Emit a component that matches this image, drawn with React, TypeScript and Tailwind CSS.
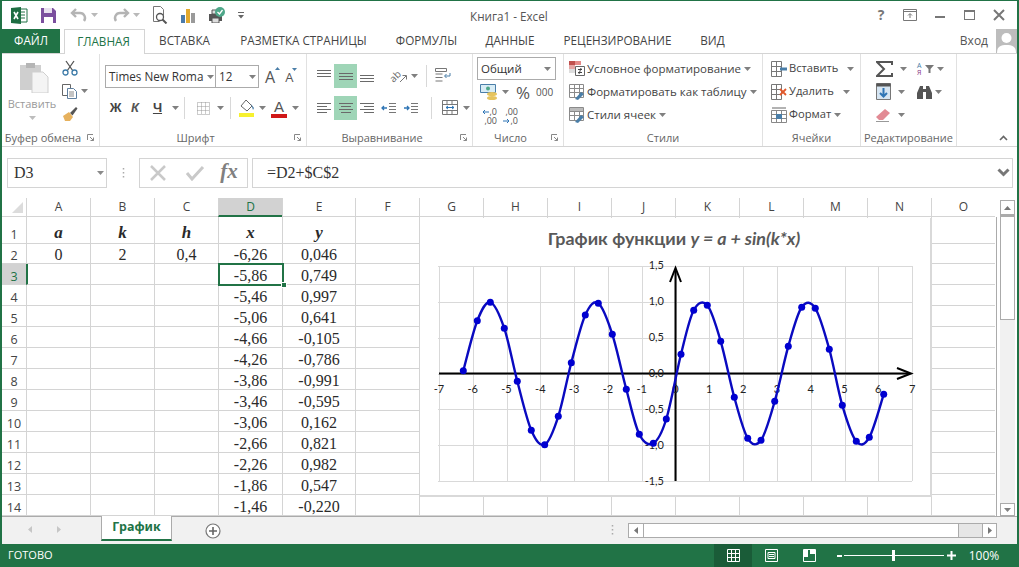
import React from "react";

const UI = "font-['Open_Sans',sans-serif]";
const Caret = ({ c = "#808080" }: { c?: string }) => (
  <svg width="7" height="4" viewBox="0 0 7 4" className="shrink-0"><path d="M0 0h7L3.500 4z" fill={c} /></svg>
);
const S = ({ w = 16, h = 16, children }: { w?: number; h?: number; children: React.ReactNode }) => (
  <svg width={w} height={h} viewBox={`0 0 ${w} ${h}`} className="shrink-0">{children}</svg>
);
const Cell = ({ w, children, className = "" }: { w: number; children?: React.ReactNode; className?: string }) => (
  <div className={`flex items-center justify-center shrink-0 ${className}`} style={{ width: w }}>{children}</div>
);
const VSep = () => <div className="w-px h-[22px] bg-[#d8d8d8] shrink-0" />;

const Lines = ({ ys, x1s, x2s }: { ys: number[]; x1s: number[]; x2s: number[] }) => (
  <S w={16} h={14}>
    {ys.map((y, i) => <path key={i} d={`M${x1s[i]} ${y + 0.5}H${x2s[i]}`} stroke="#6a6a6a" />)}
  </S>
);

const points: [number, number][] = [
  [463.3, 370.7], [477.3, 320.7], [490.3, 302.3], [504.3, 328.3], [517.3, 381.3], [531.3, 430.3], [544.7, 444.7], [558.3, 416.3],
  [571.3, 362.7], [585.3, 315], [598.3, 303.3], [612.3, 334.3], [626.3, 389.3], [639.3, 434.3], [653.3, 443.3], [666.3, 419],
  [681, 354.3], [693.7, 310.3], [707.3, 305.3], [720.7, 341.3], [734.3, 397.3], [747.7, 438.3], [761, 440.3], [774.7, 401.3],
  [788.3, 346.3], [801.7, 307.3], [815.3, 308.3], [829.3, 349.3], [842.3, 405.3], [856.3, 441.3], [869.3, 437.3], [883.7, 394.3],
];
function smooth(p: [number, number][]) {
  let d = `M${p[0][0]} ${p[0][1]}`;
  for (let i = 0; i < p.length - 1; i++) {
    const a = p[i - 1] || p[i], b = p[i], c = p[i + 1], e = p[i + 2] || c;
    d += `C${b[0] + (c[0] - a[0]) / 6} ${b[1] + (c[1] - a[1]) / 6} ${c[0] - (e[0] - b[0]) / 6} ${c[1] - (e[1] - b[1]) / 6} ${c[0]} ${c[1]}`;
  }
  return d;
}

const rows: [number, string[]][] = [
  [1, ["a", "k", "h", "x", "y"]],
  [2, ["0", "2", "0,4", "-6,26", "0,046"]],
  [3, ["", "", "", "-5,86", "0,749"]],
  [4, ["", "", "", "-5,46", "0,997"]],
  [5, ["", "", "", "-5,06", "0,641"]],
  [6, ["", "", "", "-4,66", "-0,105"]],
  [7, ["", "", "", "-4,26", "-0,786"]],
  [8, ["", "", "", "-3,86", "-0,991"]],
  [9, ["", "", "", "-3,46", "-0,595"]],
  [10, ["", "", "", "-3,06", "0,162"]],
  [11, ["", "", "", "-2,66", "0,821"]],
  [12, ["", "", "", "-2,26", "0,982"]],
  [13, ["", "", "", "-1,86", "0,547"]],
  [14, ["", "", "", "-1,46", "-0,220"]],
];
const cols: [string, number][] = [["A", 64], ["B", 64], ["C", 64], ["D", 64], ["E", 73], ["F", 64], ["G", 64], ["H", 64], ["I", 64], ["J", 64], ["K", 64], ["L", 64], ["M", 64], ["N", 64], ["O", 64]];
const tabs: [string, number][] = [["ВСТАВКА", 81], ["РАЗМЕТКА СТРАНИЦЫ", 157], ["ФОРМУЛЫ", 89], ["ДАННЫЕ", 78], ["РЕЦЕНЗИРОВАНИЕ", 137], ["ВИД", 53]];

function Group({ w, label, launcher, children }: { w: number; label: string; launcher?: boolean; children: React.ReactNode }) {
  return (
    <div className="relative flex flex-col h-full shrink-0 border-r border-[#e1e1e1]" style={{ width: w }}>
      <div className="flex-1 min-h-0">{children}</div>
      <div className={`h-[17px] pt-[2px] flex items-center justify-center text-[11px] text-[#666] whitespace-nowrap ${launcher ? "pr-[15px]" : ""}`}>{label}</div>
      {launcher && (
        <svg width="7" height="7" viewBox="0 0 7 7" className="absolute right-[5px] bottom-[5px]"><path d="M.5 6V.5H6M3 3l3.500 3.500M6.500 3.500v3h-3" fill="none" stroke="#888" /></svg>
      )}
    </div>
  );
}

const StyleRow = ({ icon, text, carX = 3, small }: { icon: React.ReactNode; text: string; carX?: number; small?: boolean }) => (
  <div className="flex items-center h-[23px]">
    <div className="w-[20px] flex justify-center shrink-0">{icon}</div>
    <span className={`${small ? "text-[11.2px]" : "text-[11.5px]"} text-[#444] whitespace-nowrap`}>{text}</span>
    <span style={{ marginLeft: carX }}><Caret /></span>
  </div>
);

const TableIcon = ({ children }: { children?: React.ReactNode }) => (
  <S>
    <path d="M.5.5h14v13H.5zM.5 4.500h14M.5 8.500h14M5.500.5v13M10.500.5v13" fill="#fff" stroke="#8a8a8a" />
    {children}
  </S>
);

export default function App() {
  return (
    <div className={`relative flex flex-col w-[1019px] h-[567px] overflow-hidden bg-white border-x-2 border-t border-[#217346] ${UI}`}>
      {/* title bar */}
      <div className="flex items-center h-[28px] shrink-0 relative">
        <div className="flex items-center pl-[9px]">
          <S w={17} h={17}>
            <path d="M6 2h10v13H6z" fill="#fff" stroke="#217346" />
            <path d="M9 5h5M9 8h5M9 11h5" stroke="#217346" />
            <path d="M0 1l10-1v17L0 16z" fill="#1e6e42" />
            <path d="M3 5l4 7M7 5l-4 7" stroke="#fff" strokeWidth="1.600" />
          </S>
          <div className="w-[13px]" />
          <S w={15} h={15}>
            <path d="M0 0h12l3 3v12H0z" fill="#7b4f9e" />
            <path d="M3 0h8v5H3z" fill="#e8e0ef" /><path d="M3 9h9v6H3z" fill="#fff" />
          </S>
          <div className="w-[14px]" />
          <S w={18} h={14}>
            <path d="M6 1L2 5l4 4" fill="none" stroke="#b4b4b4" strokeWidth="2.400" />
            <path d="M3 5h7a5 5 0 0 1 4 8" fill="none" stroke="#b4b4b4" strokeWidth="2.400" />
          </S>
          <div className="w-[3px]" /><Caret c="#b9b9b9" />
          <div className="w-[14px]" />
          <S w={18} h={14}>
            <path d="M12 1l4 4-4 4" fill="none" stroke="#b4b4b4" strokeWidth="2.400" />
            <path d="M15 5H8a5 5 0 0 0-4 8" fill="none" stroke="#b4b4b4" strokeWidth="2.400" />
          </S>
          <div className="w-[3px]" /><Caret c="#b9b9b9" />
          <div className="w-[12px]" />
          <S w={16} h={18}>
            <path d="M1.500 .5h7l3 3v6M1.500 .5v15h6" fill="#fff" stroke="#777" />
            <circle cx="8" cy="11" r="3.500" fill="#fff" stroke="#555" strokeWidth="1.300" />
            <path d="M10.500 13.500l4 4" stroke="#555" strokeWidth="2" />
          </S>
          <div className="w-[12px]" />
          <S w={16} h={15}>
            <path d="M1 7h4v8H1z" fill="#4b7bab" /><path d="M6 1h4v14H6z" fill="#e2a92d" /><path d="M11 5h4v10h-4z" fill="#9a9a9a" />
          </S>
          <div className="w-[12px]" />
          <S w={18} h={16}>
            <path d="M1 7h13v7H1z" fill="#555" /><path d="M4 3h7v4H4zM4 11h7v5H4z" fill="#ddd" stroke="#555" />
            <circle cx="12" cy="5" r="5" fill="#4ea789" /><path d="M9.500 5l2 2 3-4" fill="none" stroke="#fff" strokeWidth="1.300" />
          </S>
          <div className="w-[11px]" />
          <svg width="8" height="8" viewBox="0 0 8 8"><path d="M1 1.500h6" stroke="#666" /><path d="M1 4h6L4 7.500z" fill="#666" /></svg>
        </div>
        <div className="absolute left-[468px] top-[6px] text-[11.7px] leading-[18px] text-[#555] whitespace-nowrap">Книга1 - Excel</div>
        <div className="ml-auto flex items-center mr-[4px] text-[#777]">
          <span className="w-[28px] text-center text-[14px] font-bold leading-none">?</span>
          <Cell w={30}><S w={14} h={12}><path d="M.5.5h13v11H.5zM.5 2.500h13" fill="none" stroke="#777" /><path d="M7 9V5M5 6.500l2-2 2 2" fill="none" stroke="#777" /></S></Cell>
          <Cell w={30}><div className="w-[10px] h-[2px] bg-[#777] mt-[4px]" /></Cell>
          <Cell w={29}><div className="w-[11px] h-[10px] border border-[#777] border-t-2" /></Cell>
          <Cell w={29}><S w={12} h={12}><path d="M1 1l10 10M11 1L1 11" stroke="#777" strokeWidth="2" /></S></Cell>
        </div>
      </div>

      {/* tabs */}
      <div className="flex h-[25px] shrink-0 border-b border-[#d4d4d4] text-[11.7px] text-[#444] relative">
        <div className="w-[58px] h-[24px] bg-[#217346] text-white flex items-center justify-center">ФАЙЛ</div>
        <div className="w-[4px]" />
        <div className="w-[81px] h-[25px] pr-[2px] bg-white border border-b-0 border-[#d4d4d4] text-[#217346] flex items-center justify-center">ГЛАВНАЯ</div>
        {tabs.map(([t, w]) => (
          <div key={t} className="flex items-center justify-center h-[24px] pr-[2px] whitespace-nowrap" style={{ width: w }}>{t}</div>
        ))}
        <div className="ml-auto flex items-center h-[24px]">
          <span className="text-[12px] text-[#555] mr-[8px]">Вход</span>
          <div className="w-[21px] h-[24px] bg-[#bdbdbd] overflow-hidden flex justify-center">
            <S w={21} h={24}><circle cx="10.500" cy="9" r="5" fill="#fff" /><path d="M1 24c0-7 4-8 9.500-8s9.500 1 9.500 8z" fill="#fff" /></S>
          </div>
        </div>
      </div>

      {/* ribbon */}
      <div className="relative flex h-[93px] shrink-0 border-b border-[#d4d4d4] text-[#444]">
        <Group w={98} label="Буфер обмена" launcher>
          <div className="flex h-full">
            <div className="w-[60px] flex flex-col items-center pt-[8px] pl-[3px]">
              <S w={30} h={31}>
                <path d="M1 3h21v25H1z" fill="#cfcfcf" /><path d="M7 1h9v5H7z" fill="#b5b5b5" />
                <path d="M13 10h11l5 5v16H13z" fill="#f4f4f4" stroke="#cfcfcf" />
              </S>
              <span className="text-[11px] text-[#9a9a9a] mt-[3px] leading-[16px] -ml-[3px]">Вставить</span>
              <div className="mt-[4px] -ml-[3px]"><Caret c="#bdbdbd" /></div>
            </div>
            <div className="flex flex-col pt-[2px]">
              <div className="flex h-[23px] items-center">
                <S w={16} h={16}><path d="M4 1l7 10M12 1L5 11" stroke="#555" strokeWidth="1.300" /><circle cx="3.500" cy="12.500" r="2.500" fill="none" stroke="#3d7ba8" strokeWidth="1.300" /><circle cx="12.500" cy="12.500" r="2.500" fill="none" stroke="#3d7ba8" strokeWidth="1.300" /></S>
              </div>
              <div className="flex h-[23px] items-center">
                <S w={16} h={16}><path d="M.5 1.500h8v11h-8z" fill="#fff" stroke="#666" /><path d="M5.500 5.500h6l3 3v7h-9z" fill="#fff" stroke="#5f7f9f" /><path d="M7 9h5M7 11h5M7 13h5" stroke="#888" /></S>
                <span className="ml-[3px]"><Caret /></span>
              </div>
              <div className="flex h-[23px] items-center">
                <S w={16} h={16}><path d="M8 7l6-6 1.500 1.500-5 7z" fill="#555" /><path d="M1 10l6-4 4 5-3 4H3z" fill="#e6b15d" /></S>
              </div>
            </div>
          </div>
        </Group>
        <Group w={207} label="Шрифт" launcher>
          <div className="pl-[5px] pt-[11px]">
            <div className="flex items-center h-[23px]">
              <div className="flex items-center w-[111px] h-[23px] border border-[#ababab] pl-[3px] text-[11.7px] text-[#333] whitespace-nowrap overflow-hidden">
                <span className="w-[98px]">Times New Roma</span><Caret />
              </div>
              <div className="flex items-center w-[43px] h-[23px] border border-l-0 border-[#ababab] pl-[3px] text-[11.7px] text-[#333]">
                <span className="w-[30px]">12</span><Caret />
              </div>
              <span className="ml-[6px] text-[16px] leading-none text-[#555] relative">A<span className="absolute -top-[2px] left-[10px]"><svg width="5" height="3" viewBox="0 0 5 3"><path d="M0 3h5L2.500 0z" fill="#4a7ea8" /></svg></span></span>
              <span className="ml-[10px] text-[13px] leading-none text-[#555] mt-[2px] relative">A<span className="absolute -top-[3px] left-[7px]"><svg width="5" height="3" viewBox="0 0 5 3"><path d="M0 0h5L2.500 3z" fill="#4a7ea8" /></svg></span></span>
            </div>
            <div className="flex items-center h-[24px] mt-[8px] ">
              <Cell w={21} className="text-[13px] font-bold font-['Liberation_Sans'] text-[#444]">Ж</Cell>
              <Cell w={18} className="text-[13px] font-bold italic font-['Liberation_Sans'] text-[#555]">К</Cell>
              <Cell w={27} className="text-[13px] font-bold font-['Liberation_Sans'] text-[#444] underline">Ч</Cell>
              <Cell w={8}><Caret /></Cell>
              <Cell w={11}><VSep /></Cell>
              <Cell w={26}><S w={13} h={13}><path d="M.5.5h12v12H.5zM4.500.5v12M8.500.5v12M.5 4.500h12M.5 8.500h12" fill="none" stroke="#999" strokeDasharray="1 1" /></S></Cell>
              <Cell w={9}><Caret /></Cell>
              <Cell w={11}><VSep /></Cell>
              <Cell w={22}>
                <S w={16} h={19}><path d="M7 1l6 6-5 5-6-5z" fill="#fff" stroke="#666" /><path d="M12 5l3 4-1 2z" fill="#4a7ea8" /><path d="M0 14h15v4H0z" fill="#f7f12f" /></S>
              </Cell>
              <Cell w={9}><Caret /></Cell>
              <Cell w={24} className="flex-col">
                <span className="text-[15px] leading-[15px] text-[#555] font-['Liberation_Sans']">A</span>
                <div className="w-[16px] h-[4px] bg-[#d01818]" />
              </Cell>
              <Cell w={8}><Caret /></Cell>
            </div>
          </div>
        </Group>
        <Group w={166} label="Выравнивание" launcher>
          <div className="pl-[7px] pt-[9px]">
            <div className="flex items-center h-[25px]">
              <Cell w={20}><Lines ys={[1, 4, 7]} x1s={[1, 1, 1]} x2s={[15, 15, 15]} /></Cell>
              <Cell w={23} className="h-[24px] bg-[#9fd5b7]"><Lines ys={[4, 7, 10]} x1s={[1, 1, 1]} x2s={[15, 15, 15]} /></Cell>
              <Cell w={20}><Lines ys={[6, 9, 12]} x1s={[1, 1, 1]} x2s={[15, 15, 15]} /></Cell>
              <Cell w={26} className="ml-[8px] relative">
                <span className="-rotate-45 text-[10px] leading-none text-[#666] -ml-[7px] mt-[1px]">ab</span>
                <svg width="9" height="9" viewBox="0 0 9 9" className="absolute right-[3px] top-[4px]"><path d="M1 8l6-6M3.500 1.500H7.500V5.500" fill="none" stroke="#777" /></svg>
              </Cell>
              <Caret />
              <Cell w={16}><VSep /></Cell>
              <Cell w={17}><S w={16} h={16}><path d="M.5.5h11v3H.5zM.5 6h7M.5 9.500h7M.5 13h7" fill="none" stroke="#777" /><path d="M15 5v3h-5M11.500 6L9.500 8l2 2" fill="none" stroke="#4a7ea8" /></S></Cell>
            </div>
            <div className="flex items-center h-[25px] mt-[7px]">
              <Cell w={20}><Lines ys={[2, 5, 8, 11]} x1s={[1, 1, 1, 1]} x2s={[15, 11, 15, 11]} /></Cell>
              <Cell w={23} className="h-[24px] bg-[#9fd5b7]"><Lines ys={[2, 5, 8, 11]} x1s={[1, 3, 1, 3]} x2s={[15, 13, 15, 13]} /></Cell>
              <Cell w={20}><Lines ys={[2, 5, 8, 11]} x1s={[1, 5, 1, 5]} x2s={[15, 15, 15, 15]} /></Cell>
              <Cell w={24}><S w={16} h={14}><path d="M8 2.500h7M8 5.500h7M8 8.500h7M8 11.500h7" stroke="#777" /><path d="M6 7H1M3 5L1 7l2 2" fill="none" stroke="#2f75b5" strokeWidth="1.300" /></S></Cell>
              <Cell w={20}><S w={16} h={14}><path d="M8 2.500h7M8 5.500h7M8 8.500h7M8 11.500h7" stroke="#777" /><path d="M1 7h5M4 5l2 2-2 2" fill="none" stroke="#2f75b5" strokeWidth="1.300" /></S></Cell>
              <Cell w={20}><VSep /></Cell>
              <Cell w={17}><S w={16} h={15}><path d="M.5.5h15v14H.5zM.5 4.500h15M.5 10.500h15M5 .5v4M10 .5v4M5 10.500v4M10 10.500v4" fill="none" stroke="#777" /><path d="M4 7.500h8M6 6L4 7.500 6 9M10 6l2 1.500L10 9" fill="none" stroke="#2f75b5" /></S></Cell>
              <span className="ml-[5px]"><Caret /></span>
            </div>
          </div>
        </Group>
        <Group w={91} label="Число" launcher>
          <div className="pl-[4px] pt-[3px]">
            <div className="flex items-center w-[79px] h-[23px] border border-[#ababab] pl-[3px] text-[11.5px] text-[#333]">
              <span className="w-[63px]">Общий</span><Caret />
            </div>
            <div className="flex items-center h-[24px] pl-[3px]">
              <S w={19} h={19}><path d="M.5 1.500h15v8H.5z" fill="#d8ecf5" stroke="#4a7ea8" /><circle cx="8" cy="5.500" r="2" fill="#4ea789" /><ellipse cx="12" cy="11" rx="5" ry="2" fill="#e6c45e" /><ellipse cx="12" cy="15" rx="5" ry="2" fill="#e6c45e" /></S>
              <span className="ml-[3px]"><Caret /></span>
              <span className="ml-[7px] text-[17px] text-[#555] leading-none">%</span>
              <span className="ml-[6px] text-[10px] text-[#555] leading-none">000</span>
            </div>
            <div className="flex items-center h-[24px] pl-[3px] gap-[4px] text-[#555] text-[9px] leading-[9px]">
              <div className="flex flex-col w-[17px]">
                <div className="flex items-center justify-end gap-[1px]"><svg width="7" height="6" viewBox="0 0 7 6"><path d="M7 3H1M3 1L1 3l2 2" fill="none" stroke="#2f75b5" /></svg><span>,0</span></div>
                <span className="text-right">,00</span>
              </div>
              <div className="flex flex-col w-[17px]">
                <span className="text-right">,00</span>
                <div className="flex items-center justify-end gap-[1px]"><svg width="7" height="6" viewBox="0 0 7 6"><path d="M0 3h6M4 1l2 2-2 2" fill="none" stroke="#2f75b5" /></svg><span>,0</span></div>
              </div>
            </div>
          </div>
        </Group>
        <Group w={199} label="Стили">
          <div className="pl-[3px] pt-[3px]">
            <StyleRow text="Условное форматирование" icon={
              <S w={17} h={17}>
                <path d="M0 1h6v4H0z" fill="#c0504d" /><path d="M6 1h6v4H6z" fill="#e58a88" /><path d="M0 5h6v4H0z" fill="#e5a5a3" /><path d="M0 9h6v4H0z" fill="#ddd" /><path d="M6.500 6.500h9v9h-9z" fill="#fff" stroke="#666" /><path d="M9 9.500h4M9 12.500h4M12 8l-2 6" stroke="#444" />
              </S>} />
            <StyleRow text="Форматировать как таблицу" icon={
              <TableIcon><path d="M6 15l6-7 3 2-6 6z" fill="#4a7ea8" /></TableIcon>} />
            <StyleRow text="Стили ячеек" icon={
              <TableIcon><path d="M1 1h13v3H1z" fill="#bbb" /><path d="M6 15l6-7 3 2-6 6z" fill="#4a7ea8" /></TableIcon>} />
          </div>
        </Group>
        <Group w={98} label="Ячейки">
          <div className="pl-[6px] pt-[3px]">
            <StyleRow small carX={9} text="Вставить" icon={<S w={17} h={16}><path d="M.5.5h10v15H.5zM.5 5.500h10M.5 10.500h10M5.500.5v15" fill="#fff" stroke="#777" /><path d="M9 8h7" stroke="#4a7ea8" strokeWidth="3" /></S>} />
            <StyleRow small carX={9} text="Удалить" icon={<S w={17} h={16}><path d="M.5.5h10v15H.5zM.5 5.500h10M.5 10.500h10M5.500.5v15" fill="#fff" stroke="#777" /><path d="M9 5l6 6M15 5l-6 6" stroke="#e2592c" strokeWidth="1.800" /></S>} />
            <StyleRow small text="Формат" icon={<S w={16} h={16}><path d="M.5 3.500h15v12H.5zM.5 7.500h15M.5 11.500h15M5.500 3.500v12M10.500 3.500v12" fill="#fff" stroke="#888" /><path d="M5 7h6v5H5z" fill="#4a7ea8" /><path d="M1 1h14" stroke="#666" /></S>} />
          </div>
        </Group>
        <Group w={96} label="Редактирование">
          <div className="pl-[15px] pt-[3px]">
            <div className="flex items-center h-[23px]">
              <S w={17} h={16}><path d="M16 4V1H1l7 7-7 7h15v-3" fill="none" stroke="#555" strokeWidth="2" /></S>
              <span className="ml-[7px]"><Caret /></span>
              <div className="w-[10px]" />
              <div className="flex flex-col text-[7px] leading-[7px] w-[8px]"><span className="text-[#4a7ea8]">А</span><span className="text-[#8a3f8a]">Я</span></div>
              <svg width="9" height="8" viewBox="0 0 9 8"><path d="M0 0h9L5.500 4v4h-2V4z" fill="#777" /></svg>
              <span className="ml-[3px]"><Caret /></span>
            </div>
            <div className="flex items-center h-[23px]">
              <S w={15} h={17}><path d="M.5 .5h14v16H.5z" fill="#d6e5f2" stroke="#777" /><path d="M.5 .5h14v3H.5z" fill="#555" /><path d="M7.500 5v8M4 10l3.500 3.500L11 10" fill="none" stroke="#2f75b5" strokeWidth="2" /></S>
              <span className="ml-[7px]"><Caret /></span>
              <div className="w-[12px]" />
              <S w={15} h={14}><path d="M3 1h3v3h3V1h3l3 7v6h-6V7H6v7H0V8z" fill="#555" /></S>
              <span className="ml-[3px]"><Caret /></span>
            </div>
            <div className="flex items-center h-[23px]">
              <S w={15} h={14}><path d="M0 9l9-8 5 4-7 7H3z" fill="#e28a94" /><path d="M0 13.500h13" stroke="#999" /></S>
              <span className="ml-[7px]"><Caret /></span>
            </div>
          </div>
        </Group>
        <svg width="9" height="6" viewBox="0 0 9 6" className="absolute left-[997px] bottom-[5px]"><path d="M1 5l3.500-3.500L8 5" fill="none" stroke="#666" strokeWidth="1.600" /></svg>
      </div>

      {/* formula bar */}
      <div className="flex items-center h-[51px] shrink-0 pl-[5px] pr-[4px]">
        <div className="flex items-center w-[100px] h-[30px] border border-[#d4d4d4] pl-[6px] font-['Liberation_Serif',serif] text-[16px] text-[#333]">
          <span className="w-[83px]">D3</span><Caret c="#8a8a8a" />
        </div>
        <div className="w-[32px] flex justify-center">
          <svg width="3" height="12" viewBox="0 0 3 12"><path d="M1.500 1v1.500M1.500 5v1.500M1.500 9v1.500" stroke="#aaa" strokeWidth="1.500" /></svg>
        </div>
        <div className="flex items-center w-[109px] h-[30px] border border-[#d4d4d4]">
          <Cell w={35}><S w={18} h={18}><path d="M2 2l14 14M16 2L2 16" stroke="#c9c9c9" strokeWidth="2.500" /></S></Cell>
          <Cell w={39}><S w={20} h={16}><path d="M2 8l5 6L18 2" fill="none" stroke="#c9c9c9" strokeWidth="3" /></S></Cell>
          <Cell w={30} className="font-['Liberation_Serif',serif] italic font-bold text-[#808080] text-[21px] leading-none pb-[2px]">fx</Cell>
        </div>
        <div className="flex items-center flex-1 h-[30px] ml-[4px] border border-[#d4d4d4] pl-[14px] pr-[2px] font-['Liberation_Serif',serif] text-[16px] text-[#333]">
          <span className="flex-1">=D2+$C$2</span>
          <svg width="13" height="9" viewBox="0 0 13 9"><path d="M1.500 1.500l5 5 5-5" fill="none" stroke="#777" strokeWidth="3" /></svg>
        </div>
      </div>

      {/* sheet */}
      <div className="relative flex h-[318px] shrink-0">
        <div className="relative flex flex-col w-[995px] shrink-0 overflow-hidden">
          <div className="flex h-[19px] shrink-0">
            <div className="w-[24px] shrink-0 flex items-end justify-end pr-[3px] pb-[3px] border-b border-[#d4d4d4]">
              <svg width="11" height="11" viewBox="0 0 11 11"><path d="M11 0v11H0z" fill="#dcdcdc" /></svg>
            </div>
            {cols.map(([c, w]) => (
              <div key={c} style={{ width: w }} className={`shrink-0 flex items-center justify-center text-[12px] leading-none border-l border-l-[#d4d4d4] ${c === "D" ? "bg-[#d2d2d2] text-[#217346] border-b-2 border-b-[#217346]" : "text-[#444] border-b border-b-[#d4d4d4]"}`}>{c}</div>
            ))}
          </div>
          <div className="flex flex-col border-r border-[#ababab]">
            {rows.map(([n, vals]) => (
              <div key={n} className={`flex shrink-0 ${n === 1 ? "h-[27px]" : n === 2 ? "h-[20px]" : "h-[21px]"}`}>
                <div className={`w-[24px] shrink-0 flex items-end justify-center text-[12.5px] leading-[14px] border-b border-[#d4d4d4] ${n === 1 ? "pb-[1px]" : ""} ${n === 3 ? "bg-[#d2d2d2] text-[#217346]" : "text-[#444]"}`}>{n}</div>
                {cols.map(([c, w], i) => (
                  <div key={c} style={{ width: w }} className={`shrink-0 flex items-center justify-center font-['Liberation_Serif',serif] text-[#2a2a2a] border-l border-b border-[#d4d4d4] ${n === 3 && i === 0 ? "border-l-2 border-l-[#217346]" : ""} ${n === 1 ? "font-bold italic text-[17px] pt-[5px]" : "text-[16px] pt-[3px]"}`}>{vals[i] || ""}</div>
                ))}
              </div>
            ))}
          </div>
          {/* selected cell */}
          <div className="absolute left-[216px] top-[65px] w-[66px] h-[23px] border-2 border-[#217346]" />
          <div className="absolute left-[279px] top-[84px] w-[6px] h-[6px] bg-[#217346] border border-white" />
          {/* chart */}
          <div className="absolute left-[418px] top-[20px] w-[512px] h-[279px] bg-white border-r-2 border-b-2 border-[#d9d9d9]">
            <div className="absolute top-[8px] left-0 w-[508px] text-center text-[17.9px] leading-[24px] font-bold text-[#595959] font-['Lato',sans-serif] whitespace-nowrap">
              График функции <span className="italic">y = a + sin(k*x)</span>
            </div>
            <svg width="512" height="279" viewBox="420 218 512 279" className="absolute left-0 top-0">
              {[-7, -6, -5, -4, -3, -2, -1, 0, 1, 2, 3, 4, 5, 6, 7].map((v) => (
                <path key={v} d={`M${Math.round(675.5 + v * 33.8) + 0.5} 266V481`} stroke="#d9d9d9" />
              ))}
              {[-1.5, -1, -0.5, 0, 0.5, 1, 1.5].map((v) => (
                <path key={v} d={`M438 ${Math.round(373.5 - v * 71.5) + 0.5}H912`} stroke="#d9d9d9" />
              ))}
              <path d="M439 373.500H910M675.500 481V269" fill="none" stroke="#000" strokeWidth="2" />
              <path d="M897 368l14 5.500-14 5.500" fill="none" stroke="#000" strokeWidth="2" />
              <path d="M670 282l5.500-14 5.500 14" fill="none" stroke="#000" strokeWidth="2" />
              <g fontFamily="Lato, sans-serif" fontSize="11" fill="#222" textAnchor="middle">
                {[-7, -6, -5, -4, -3, -2, -1, 0, 1, 2, 3, 4, 5, 6, 7].map((v) => (
                  <text key={v} x={675.500 + v * 33.8} y={393}>{v}</text>
                ))}
              </g>
              <g fontFamily="Lato, sans-serif" fontSize="11" fill="#222" textAnchor="end">
                {[["1,5", 269], ["1,0", 305], ["0,5", 341], ["0,0", 377], ["-0,5", 413], ["-1,0", 449], ["-1,5", 485]].map(([t, y]) => (
                  <text key={t} x={664} y={y}>{t}</text>
                ))}
              </g>
              <path d={smooth(points)} fill="none" stroke="#0a0ac0" strokeWidth="2.400" />
              {points.map(([x, y], i) => <circle key={i} cx={x} cy={y} r="3.500" fill="#0000d0" />)}
            </svg>
          </div>
        </div>
        {/* v scroll */}
        <div className="flex flex-col flex-1 pl-[3px] mr-[2px] pt-[2px]">
          <div className="flex flex-col flex-1 w-[15px] bg-[#f1f1f1]">
            <div className="flex items-center justify-center w-[15px] h-[15px] bg-white border border-[#ababab]">
              <svg width="7" height="4" viewBox="0 0 7 4"><path d="M0 4h7L3.500 0z" fill="#777" /></svg>
            </div>
            <div className="w-[15px] h-[105px] bg-white border border-[#ababab] border-t-2" />
            <div className="mt-auto flex items-center justify-center w-[15px] h-[13px] bg-white border border-[#ababab]"><Caret /></div>
          </div>
        </div>
      </div>

      {/* sheet tabs */}
      <div className="relative flex h-[28px] shrink-0 items-start bg-[#f1f1f1] border-t border-[#ababab]">
        <div className="w-[99px] flex items-center h-[24px] shrink-0">
          <span className="ml-[26px]"><svg width="4" height="7" viewBox="0 0 4 7"><path d="M4 0v7L0 3.500z" fill="#c6c6c6" /></svg></span>
          <span className="ml-[25px]"><svg width="4" height="7" viewBox="0 0 4 7"><path d="M0 0v7l4-3.500z" fill="#c6c6c6" /></svg></span>
        </div>
        <div className="-mt-[1px] w-[71px] h-[25px] bg-white border-x border-[#ababab] border-b-2 border-b-[#217346] flex items-center justify-center text-[12.5px] font-bold text-[#217346] font-['Noto_Sans',sans-serif]">График</div>
        <div className="ml-[33px] mt-[6px]">
          <S w={16} h={16}><circle cx="8" cy="8" r="7" fill="#fff" stroke="#777" strokeWidth="1.200" /><path d="M8 4v8M4 8h8" stroke="#666" strokeWidth="1.600" /></S>
        </div>
        <div className="ml-[390px] mt-[7px]"><svg width="3" height="12" viewBox="0 0 3 12"><path d="M1.500 1v1.500M1.500 5v1.500M1.500 9v1.500" stroke="#aaa" strokeWidth="1.500" /></svg></div>
        <div className="ml-[14px] mt-[6px] flex w-[369px] h-[15px] bg-[#e6e6e6] border border-[#ababab]">
          <div className="w-[14px] flex items-center justify-center bg-white"><svg width="4" height="7" viewBox="0 0 4 7"><path d="M4 0v7L0 3.500z" fill="#777" /></svg></div>
          <div className="w-[316px] bg-white border-x border-[#ababab]" />
          <div className="flex-1" />
          <div className="w-[14px] flex items-center justify-center bg-white border-l border-[#ababab]"><svg width="4" height="7" viewBox="0 0 4 7"><path d="M0 0v7l4-3.500z" fill="#777" /></svg></div>
        </div>
      </div>

      {/* status */}
      <div className="flex items-center h-[23px] shrink-0 bg-[#217346] text-white text-[11px]">
        <span className="ml-[6px]">ГОТОВО</span>
        <div className="ml-auto flex items-center h-full">
          <Cell w={38} className="h-full bg-[#1a5c38]"><S w={13} h={13}><path d="M.5.5h12v12H.5zM4.500.5v12M8.500.5v12M.5 4.500h12M.5 8.500h12" fill="none" stroke="#fff" /></S></Cell>
          <Cell w={38}><S w={13} h={13}><path d="M.5.5h12v12H.5zM3 3.500h7v6H3zM4 5.500h5M4 7.500h5" fill="none" stroke="#fff" /></S></Cell>
          <Cell w={38}><S w={13} h={13}><path d="M.5.5h12v12H.5z" fill="none" stroke="#fff" /><path d="M1 1h4v7H1zM7 1h5v4H7z" fill="#fff" /></S></Cell>
          <span className="w-[5px] h-[2px] bg-white ml-[9px]" />
          <div className="relative w-[100px] h-px bg-white ml-[2px]">
            <div className="absolute left-[48px] -top-[5px] w-[3px] h-[11px] bg-white" />
          </div>
          <span className="ml-[3px]"><svg width="9" height="9" viewBox="0 0 9 9"><path d="M4.500 0v9M0 4.500h9" stroke="#fff" strokeWidth="2" /></svg></span>
          <span className="w-[61px] text-center pr-[5px] text-[12px]">100%</span>
        </div>
      </div>
    </div>
  );
}
